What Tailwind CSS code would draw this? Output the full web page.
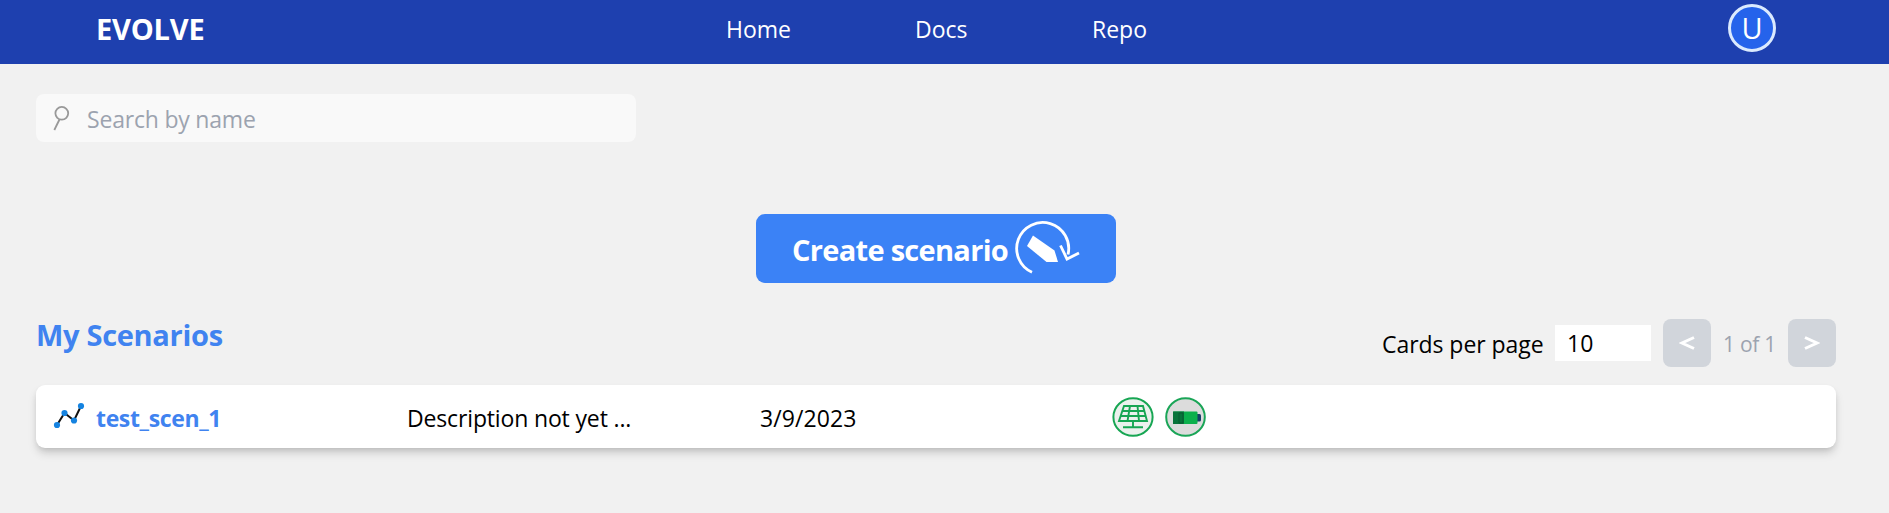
<!DOCTYPE html>
<html lang="en">
<head>
<meta charset="utf-8">
<title>EVOLVE</title>
<script src="https://cdn.jsdelivr.net/npm/@tailwindcss/browser@4"></script>
</head>
<body class="min-h-screen bg-[#f1f1f1] font-['Open_Sans',sans-serif] text-[23px] leading-8 text-black">
<header class="flex h-16 items-center bg-[#1e40af] pb-1.5 pl-24 pr-[113px] text-white">
  <div class="w-[630px] text-[29px] font-bold tracking-[-0.2px]">EVOLVE</div>
  <nav class="flex grow">
    <a class="w-[189px]">Home</a><a class="w-[177px]">Docs</a><a>Repo</a>
  </nav>
  <div class="-mt-0.5 flex size-12 items-center justify-center rounded-full border-3 border-[#dbeafe] bg-[#2563eb] text-[29px]">U</div>
</header>
<main class="pb-16 pl-9 pr-[53px] pt-[30px]">
  <div class="flex h-12 w-[600px] items-center rounded-lg bg-[#f9f9f9] pl-[17px] text-[#9ca3af]">
    <svg class="h-[26px] w-[17px]" viewBox="0 0 17 26" fill="none" stroke="#999" stroke-width="1.8"><circle cx="8.8" cy="8.3" r="6.4"/><path d="M6.5 14.5 1.3 25"/></svg>
    <span class="pl-[17px] pt-0.5 tracking-[-0.2px]">Search by name</span>
  </div>

  <div class="flex justify-center pt-[72px]">
    <button class="flex h-[69px] w-[360px] items-center rounded-[9px] bg-[#3b82f6] pl-[36px] text-[29px] font-bold text-white">
      <span class="w-[221px] whitespace-nowrap pt-0.5 text-left tracking-[-0.7px]">Create scenario</span>
      <svg class="h-[60px] w-[68px] shrink-0" viewBox="0 0 68 60" fill="none" stroke="#fff" stroke-width="2.8"><path d="M19 53.2A26 26 0 1 1 55 35.5"/><path d="M47.5 26.5 54 40l12-6"/><path d="M20 16.5 41.5 31.5 45 43H33.5L14 27Z" fill="#fff" stroke="none"/></svg>
    </button>
  </div>

  <div class="flex h-[84px] items-start justify-between pt-9">
    <h1 class="text-[29px] font-bold tracking-[-0.3px] text-[#4083f0]">My Scenarios</h1>
    <div class="flex h-12 items-center">
      <span class="w-[173px] whitespace-nowrap pt-0.5 tracking-[-0.05px]">Cards per page</span>
      <div class="h-9 w-24 bg-white pl-3 pt-0.5">10</div>
      <button class="ml-3 flex size-12 items-center justify-center rounded-lg bg-[#d1d5db]"><svg class="size-4" viewBox="0 0 16 16" fill="none" stroke="#fff" stroke-width="3"><path d="M15 2.5 3 8l12 5.5"/></svg></button>
      <span class="w-[77px] pt-0.5 text-center text-[21px] tracking-[-0.3px] text-[#9ca3af]">1 of 1</span>
      <button class="flex size-12 items-center justify-center rounded-lg bg-[#d1d5db]"><svg class="size-4" viewBox="0 0 16 16" fill="none" stroke="#fff" stroke-width="3"><path d="M1 2.5 13 8 1 13.5"/></svg></button>
    </div>
  </div>

  <div class="mt-[18px] flex h-[63px] items-center rounded-[9px] bg-white pl-[17px] shadow-[0_6px_10px_-1px_rgb(0_0_0/0.15),0_3px_6px_-2px_rgb(0_0_0/0.12)]">
    <svg class="mb-1 h-[28px] w-[32px]" viewBox="0 0 32 28" fill="none"><path d="M4 24 11.5 12 21 19.5 28 5" stroke="#111" stroke-width="2"/><g fill="#1583e0"><circle cx="4" cy="24" r="3.1"/><circle cx="11.5" cy="12" r="3.1"/><circle cx="21" cy="19.5" r="3.1"/><circle cx="28" cy="5" r="3.1"/></g></svg>
    <span class="ml-[11px] w-[311px] pt-0.5 font-bold tracking-[-0.35px] text-[#4083f0]">test_scen_1</span>
    <span class="w-[353px] pt-0.5 tracking-[-0.15px]">Description not yet ...</span>
    <span class="w-[352px] pt-0.5 tracking-[0.1px]">3/9/2023</span>
    <svg class="h-10 w-[42px]" viewBox="0 0 42 40" fill="none" stroke="#17a653"><ellipse cx="21" cy="20" rx="19.6" ry="18.8" fill="#ebf1ed" stroke-width="2"/><path d="M12 9h19l4 15H7ZM10 14h22.5M8.500 19h25M18 9l-2.500 15M25.500 9 27 24M21 24v6M11 30.300h20" stroke-width="1.9"/></svg>
    <svg class="ml-[11px] h-10 w-[42px]" viewBox="0 0 42 40"><ellipse cx="20.500" cy="20" rx="19.300" ry="18.800" fill="#dcdcdc" stroke="#1aa557" stroke-width="2"/><rect x="30" y="17" width="6" height="7.500" rx="1.500" fill="#173f68"/><rect x="8" y="14.500" width="24.500" height="12.500" rx="1" fill="#0bb04c"/><path d="M8 14.500h11v12.500H8Z" fill="#08733a"/><path d="M14 16h4v10h-4Z" fill="none" stroke="#075c30"/></svg>
  </div>
</main>
</body>
</html>
